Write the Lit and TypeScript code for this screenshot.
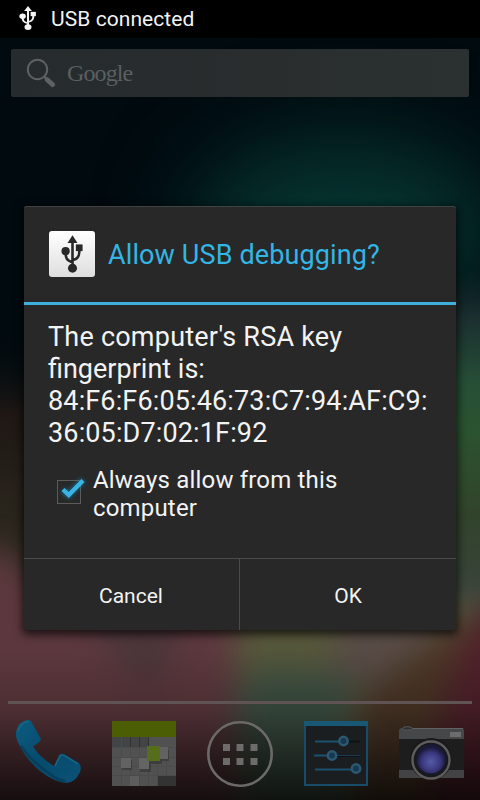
import { LitElement, html, css, svg } from "lit";
import { customElement } from "lit/decorators.js";

const usbGlyph = (color: string) => svg`
  <g fill="none" stroke=${color} stroke-width="2.7">
    <path d="M12 5V33M12 28C5.8 26.5 4.8 23.500 4.800 18M12 26C18.2 24.500 19.2 21 19.200 15"/>
  </g>
  <g fill=${color}>
    <path d="M12 0L17.200 8H6.800Z"/>
    <circle cx="4.800" cy="16.500" r="4.300"/>
    <rect x="15.500" y="9.500" width="7" height="7"/>
    <circle cx="12" cy="34.300" r="4.700"/>
  </g>`;

@customElement("app-root")
export class AppRoot extends LitElement {
  static styles = css`
    :host {
      display: block;
      width: 480px;
      height: 800px;
      position: relative;
      overflow: hidden;
      font-family: Roboto, "Noto Sans", sans-serif;
      color: #f3f3f3;
      background: #010a0e;
    }
    .wall { position: absolute; inset: 0; width: 480px; height: 800px; }
    .wall filter { color-interpolation-filters: sRGB; }
    .screen { position: relative; height: 800px; display: flex; flex-direction: column; }
    .status {
      height: 38px; background: #000; display: flex; align-items: center;
      padding-left: 19px; gap: 14px; font-size: 21px; letter-spacing: .07px; box-sizing: border-box; flex: none;
    }
    .status span { white-space: nowrap; }
    .status svg { margin-top: -2px; }
    .search {
      margin: 11px 11px 0; height: 48px; flex: none; border-radius: 2px;
      background: linear-gradient(90deg, #262b2d, #292d2e 55%, #2b3131);
      display: flex; align-items: center; padding-left: 14px; box-sizing: border-box;
    }
    .google { font-family: "Liberation Serif", serif; font-size: 24px; letter-spacing: -.9px; color: #5a5f61; margin-left: 11px; }
    .dialog {
      margin: 109px 24px 0; height: 424px; flex: none; background: #282828;
      border-radius: 3px; box-shadow: 0 3px 9px 2px rgba(0,0,0,.65), inset 0 1px #3f4344;
      display: flex; flex-direction: column;
    }
    .head {
      height: 96px; border-bottom: 3px solid #3fb0dc; display: flex; align-items: center;
      padding-left: 25px; gap: 13px; font-size: 27px; letter-spacing: .12px; color: #33b5e5; flex: none;
    }
    .head span { padding-top: 2px; }
    .usb {
      width: 46px; height: 46px; border-radius: 3px; display: flex; align-items: center; justify-content: center;
      background: linear-gradient(#fff, #dedede);
    }
    .message { margin: 16px 24px 0; font-size: 27px; letter-spacing: .22px; line-height: 32px; white-space: nowrap; }
    .message .word { letter-spacing: normal; }
    .message .fp { letter-spacing: .14px; }
    .check { display: flex; margin: 17px 24px 0 29px; gap: 4px; font-size: 24px; letter-spacing: .17px; line-height: 28px; white-space: nowrap; }
    .check svg { margin-top: 2px; }
    .buttons { display: flex; margin-top: auto; height: 72px; border-top: 1px solid #4b4b4b; box-sizing: border-box; }
    .button { flex: 1; display: flex; align-items: center; justify-content: center; font-size: 21px; padding-top: 2px; }
    .button:first-child { flex: 0 0 215px; padding-right: 1px; box-sizing: border-box; }
    .button + .button { border-left: 1px solid #4b4b4b; }
    .divider { height: 3px; margin: 71px 8px 0; background: #5f5354; flex: none; }
    .dock { display: flex; justify-content: space-between; padding: 14px 12px 0; }
  `;

  render() {
    return html`
      <svg class="wall" viewBox="0 0 480 800">
        <defs>
          <filter id="soft" x="-60%" y="-80%" width="220%" height="260%"><feGaussianBlur stdDeviation="46"/></filter>
          <filter id="mid" x="-50%" y="-50%" width="200%" height="200%"><feGaussianBlur stdDeviation="15"/></filter>
          <linearGradient id="left" x1="0" y1="0" x2="0" y2="1">
            <stop offset="0" stop-color="#000a0f" stop-opacity="0"/>
            <stop offset=".25" stop-color="#1e1714"/>
            <stop offset=".7" stop-color="#2f2b20"/>
            <stop offset="1" stop-color="#38322a"/>
          </linearGradient>
          <linearGradient id="right" x1="0" y1="0" x2="0" y2="1">
            <stop offset="0" stop-color="#172b2e" stop-opacity="0"/>
            <stop offset=".12" stop-color="#1b2e2f"/>
            <stop offset=".3" stop-color="#264f37"/>
            <stop offset=".42" stop-color="#2b532f"/>
            <stop offset=".65" stop-color="#32432b"/>
            <stop offset=".9" stop-color="#3b4440"/>
            <stop offset="1" stop-color="#3b3c3b"/>
          </linearGradient>
          <linearGradient id="fade" x1="0" y1="0" x2="0" y2="1">
            <stop offset="0" stop-color="#000" stop-opacity="0"/>
            <stop offset=".4" stop-color="#000" stop-opacity=".18"/>
            <stop offset="1" stop-color="#000" stop-opacity=".76"/>
          </linearGradient>
        </defs>
        <rect width="480" height="800" fill="#010a0f"/>
        <g filter="url(#soft)">
          <ellipse cx="345" cy="232" rx="155" ry="95" fill="#063430"/>
        </g>
        <rect y="330" width="240" height="330" fill="url(#left)"/>
        <rect x="240" y="270" width="240" height="380" fill="url(#right)"/>
        <g filter="url(#mid)">
          <path d="M-60 535L5 552L60 605L240 605V860H-60Z" fill="#5c383e"/>
          <path d="M236 600H560V860H236Z" fill="#55563a"/>
          <path d="M340 600L450 610L400 700L330 680Z" fill="#574b45"/>
          <path d="M236 695L260 670L350 675L345 860H250Z" fill="#3d5043"/>
          <path d="M560 605L450 625L360 700L345 860H560Z" fill="#4b3626"/>
          <path d="M560 590L478 610L445 690L420 860H560Z" fill="#50212b"/>
        </g>
        <g filter="url(#mid)" opacity=".45">
          <path d="M80 615H190L150 695Z" fill="#363333"/>
        </g>
        <rect y="650" width="480" height="150" fill="url(#fade)"/>
      </svg>
      <div class="screen">
        <div class="status">
          <svg width="18" height="24" viewBox="0 0 24 39" preserveAspectRatio="none">${usbGlyph("#f4f4f4")}</svg>
          <span>USB connected</span>
        </div>
        <div class="search">
          <svg width="31" height="31" viewBox="0 0 31 31" fill="none" stroke="#5d6162">
            <circle cx="12.5" cy="11.5" r="9.700" stroke-width="2"/>
            <path d="M19.500 19L22 21.500" stroke-width="2.500"/>
            <path d="M22.500 22L27.500 26.500" stroke-width="5" stroke-linecap="round"/>
          </svg>
          <span class="google">Google</span>
        </div>
        <div class="dialog">
          <div class="head">
            <div class="usb"><svg width="23" height="38" viewBox="0 0 24 39">${usbGlyph("#282828")}</svg></div>
            <span>Allow USB debugging?</span>
          </div>
          <div class="message">The computer's RSA key<br><span class="word">fingerprint is:</span><br><span class="fp">84:F6:F6:05:46:73:C7:94:AF:C9:<br>36:05:D7:02:1F:92</span></div>
          <div class="check">
            <svg width="36" height="36" viewBox="0 0 36 36" fill="none">
              <defs><filter id="glow" x="-40%" y="-40%" width="180%" height="180%"><feGaussianBlur stdDeviation="2"/></filter></defs>
              <rect x="4.500" y="12.500" width="23" height="23" stroke="#5b5b59"/>
              <path d="M10 22L15.500 27L30 12" stroke="#138ab8" stroke-width="6" opacity=".6" filter="url(#glow)"/>
              <path d="M10 21.500L15.800 27L30 12.500" stroke="#3ab4e2" stroke-width="4.400"/>
            </svg>
            <span>Always allow from this<br>computer</span>
          </div>
          <div class="buttons"><div class="button">Cancel</div><div class="button">OK</div></div>
        </div>
        <div class="divider"></div>
        <div class="dock">
          <svg width="72" height="72" viewBox="0 0 72 72">
            <defs><linearGradient id="ph" x1="0" y1="0" x2="1" y2="1"><stop offset="0" stop-color="#0d5c80"/><stop offset=".5" stop-color="#074b6e"/><stop offset="1" stop-color="#0a5276"/></linearGradient></defs>
            <path d="M4 14Q6 3 16 2Q19 2 20 5L29 21Q28 25 21 28Q26 38 42 48Q44 44 47 37Q49 35 52 36L67 45Q70 48 68 54Q63 65 54 65Q42 64 28 53Q14 41 8 28Q3 20 4 14Z" fill="url(#ph)"/>
            <path d="M6 13Q9 4 17 3M43 48L48 38Q50 36 53 38L66 46" fill="none" stroke="#1c6a82" stroke-width="1.200"/>
            <path d="M9 28Q20 44 38 56Q46 63 54 63" fill="none" stroke="#04384f" stroke-width="3" opacity=".6"/>
          </svg>
          <svg width="72" height="72" viewBox="0 0 72 72">
            <rect x="4" y="3" width="64" height="65" fill="#515151"/>
            <rect x="4" y="3" width="64" height="16" fill="#4b5e04"/>
            <rect x="4" y="19" width="36" height="10" fill="#434446"/>
            <path d="M13.500 19V68M22.500 19V68M31.500 19V68M40.500 19V68M49.500 30V68M58.500 30V68M4 29.500H68M4 39.500H68M4 48.500H68M4 57.500H68" stroke="#4b4b4b"/>
            <path d="M22.500 19V29M31.500 19V29M40.500 19V29" stroke="#303031"/>
            <g fill="#222" opacity=".4"><rect x="14" y="42" width="10" height="10"/><rect x="32" y="41" width="11" height="13"/><rect x="40" y="32" width="14" height="14"/><rect x="53" y="32" width="8" height="11"/></g>
            <rect x="13" y="40" width="10" height="10" fill="#626262"/><rect x="31" y="40" width="10" height="11" fill="#646464"/>
            <rect x="52" y="29" width="8" height="12" fill="#626262"/><rect x="39" y="28" width="13" height="15" fill="#566d1e"/>
            <rect x="22" y="58" width="9" height="10" fill="#5d5d5d"/><rect x="50" y="58" width="18" height="10" fill="#333"/>
          </svg>
          <svg width="72" height="72" viewBox="0 0 72 72">
            <circle cx="36" cy="36" r="31.700" fill="#000" fill-opacity=".12" stroke="#6c6969" stroke-width="2.600"/>
            <g fill="#6e6b6b"><rect x="19" y="26" width="7" height="7"/><rect x="32.500" y="26" width="7" height="7"/><rect x="46.500" y="26" width="7" height="7"/><rect x="19" y="40" width="7" height="7"/><rect x="32.500" y="40" width="7" height="7"/><rect x="46.500" y="40" width="7" height="7"/></g>
          </svg>
          <svg width="72" height="72" viewBox="0 0 72 72">
            <rect x="5" y="4" width="62" height="63" fill="#1b1e20" stroke="#184c69" stroke-width="2"/>
            <rect x="4" y="3" width="64" height="5" fill="#195874"/>
            <path d="M45 23.500H60M32 38H60" stroke="#0c1216" stroke-width="2"/>
            <path d="M32 37.500H60" stroke="#173c52"/>
            <path d="M15 23.500H40M14 37.500H28M15 51.500H52" stroke="#1b506e" stroke-width="2.200"/>
            <g fill="#16394f" stroke="#2c5872" stroke-width="2.500"><circle cx="43.500" cy="23" r="4.200"/><circle cx="32" cy="37.500" r="4.200"/><circle cx="56" cy="50.500" r="4.200"/></g>
          </svg>
          <svg width="72" height="72" viewBox="0 0 72 72">
            <defs>
              <radialGradient id="lens" cx=".5" cy=".6"><stop offset="0" stop-color="#545ba6"/><stop offset=".65" stop-color="#3a367c"/><stop offset="1" stop-color="#1b1a3a"/></radialGradient>
            </defs>
            <path d="M3 13Q3 10 6 10Q12 7 17 10H66Q68 10 68 13V60H3Z" fill="#1d1d1e"/>
            <path d="M3 13Q3 10 6 10Q12 7 17 10H66Q68 10 68 13V21H3Z" fill="#464748"/>
            <path d="M17 10.500H67" stroke="#626262"/>
            <ellipse cx="11.500" cy="10.500" rx="5" ry="1.800" fill="#323232" stroke="#606060" stroke-width=".8"/>
            <rect x="54" y="14" width="11" height="5" fill="#6d6d6d"/>
            <rect x="3" y="52" width="65" height="8" fill="#434345"/>
            <circle cx="35" cy="41" r="21" fill="#19191b"/>
            <circle cx="35" cy="42" r="18.500" fill="#171820" stroke="#5e5d5c" stroke-width="2.400"/>
            <circle cx="35" cy="41" r="14.500" fill="url(#lens)"/>
          </svg>
        </div>
      </div>`;
  }
}
